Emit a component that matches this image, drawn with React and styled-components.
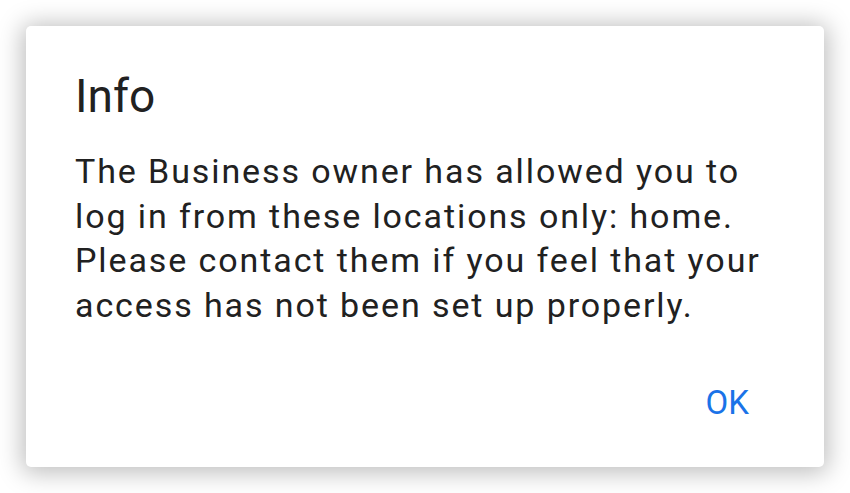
import React from 'react'
import styled, { createGlobalStyle } from 'styled-components'

const GlobalStyle = createGlobalStyle`
  html, body {
    margin: 0;
    padding: 0;
    background: #ffffff;
  }
  body {
    font-family: Roboto, "Noto Sans", sans-serif;
  }
`

const Page = styled.div`
  width: 850px;
  height: 493px;
  padding: 26px;
  box-sizing: border-box;
`

const Dialog = styled.div`
  width: 798px;
  height: 441px;
  box-sizing: border-box;
  background: #ffffff;
  border-radius: 5px;
  box-shadow: 0 2px 24px 4px rgba(0, 0, 0, 0.26);
  padding: 43px 49px 0 49px;
  display: flex;
  flex-direction: column;
`

const Title = styled.h2`
  margin: 0;
  font-size: 46px;
  font-weight: 400;
  line-height: 54px;
  color: #212121;
`

const Message = styled.p`
  margin: 26px 0 0 0;
  font-size: 34px;
  letter-spacing: 1.9px;
  line-height: 44.5px;
  color: #212121;
`

const Actions = styled.div`
  display: flex;
  justify-content: flex-end;
  margin-top: 56px;
`

const Button = styled.button`
  border: none;
  background: transparent;
  font-family: Roboto, sans-serif;
  font-size: 33px;
  color: #1a73e8;
  padding: 0;
  margin-right: 26px;
  cursor: pointer;
`

const App = () => (
  <Page>
    <GlobalStyle />
    <Dialog>
      <Title>Info</Title>
      <Message>
        The Business owner has allowed you to log in from these locations only: home. Please contact them if you feel
        that your access has not been set up properly.
      </Message>
      <Actions>
        <Button>OK</Button>
      </Actions>
    </Dialog>
  </Page>
)

export default App
